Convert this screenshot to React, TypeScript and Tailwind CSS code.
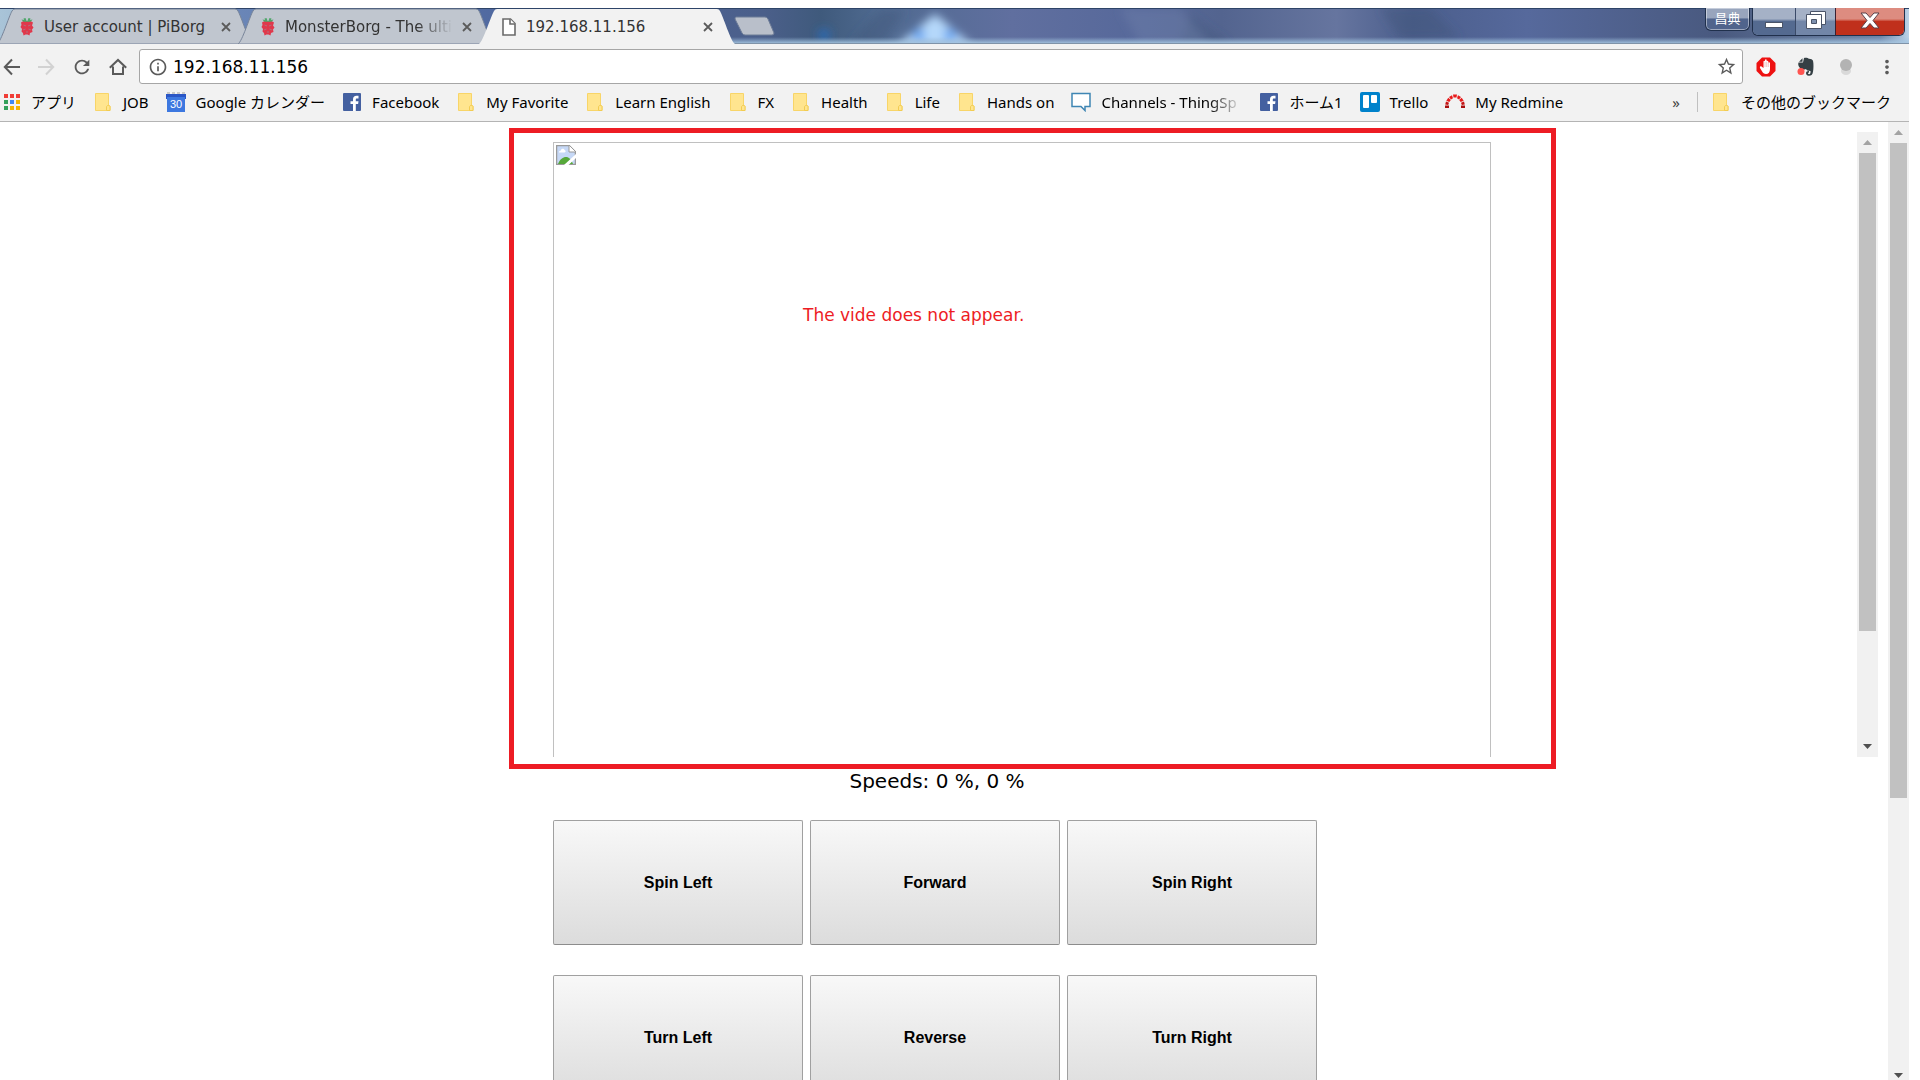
/**
 * Robot web console, drawn inside a Windows 7 era Chrome window.
 * The page shows the camera frame on top and the drive buttons below it.
 */

import type { ReactNode } from "react";
import { MdInfoOutline, MdMoreVert, MdRefresh, MdStarBorder } from "react-icons/md";

/* ---------- icons ---------- */

function RaspberryIcon() {
  return (
    <svg width="16" height="20" viewBox="0 0 16 20" className="shrink-0">
      <path d="M4.500 4h7l2.500 1.500-1 3 1.500 2-1.500 2 .5 2.500-2.500 1-.5 2.500-2-1h-2l-2 1L4 16l-1.500-1.500.5-2.500-1.500-2 1-2L2 5.500z" fill="#e0384b" />
      <path d="M8 5L6.500 1 4.500 1.500 5 3 2.500 2.500 4 4.500zM8 5l1.500-4 2 .5L11 3l2.500-.5L12 4.500z" fill="#4fa66a" />
      <path d="M4.500 8l2.500 1M11.500 8L9 9M4 13l2.500-1M12 13l-2.500-1M7 15h2" stroke="#b0707c" strokeWidth="1" />
    </svg>
  );
}

function PageIcon() {
  return (
    <svg width="16" height="18" viewBox="0 0 16 18" fill="#fff" stroke="#6b6b6b" strokeWidth="1.600" className="shrink-0">
      <path d="M2 1h7.500L14 5.500V17H2z" />
      <path d="M9 1v5h5" />
    </svg>
  );
}

function FolderIcon() {
  return (
    <svg width="20" height="20" viewBox="0 0 20 20">
      <path d="M2.500 1.500h13V13l1.500 1v4.500H2.500z" fill="#ffe58f" stroke="#f8d568" />
      <path d="M13.500 18.500V14.500a2 2 0 0 1 3.500 0v4z" fill="#ffe58f" stroke="#f2cc52" />
    </svg>
  );
}

const APP_COLORS = ["#f03e37", "#f03e37", "#f03e37", "#34a05a", "#4088f0", "#f5b400", "#34a05a", "#f5b400", "#f5b400"];

function AppsIcon() {
  return (
    <svg width="18" height="18" viewBox="0 0 18 18">
      {APP_COLORS.map((c, i) => (
        <rect key={i} x={1 + (i % 3) * 6} y={1 + Math.floor(i / 3) * 6} width="4" height="4" fill={c} />
      ))}
    </svg>
  );
}

function CalendarIcon() {
  return (
    <svg width="20" height="20" viewBox="0 0 20 20">
      <rect x="1" y="0" width="18" height="4" fill="#c9c9c9" />
      <path d="M5 0v2.500M10 0v2.500M15 0v2.500" stroke="#f4f4f4" strokeWidth="2" />
      <rect x="0" y="2" width="20" height="5" fill="#2a56c6" />
      <rect x="1" y="5" width="18" height="15" fill="#3d78e0" />
      <text x="10" y="16" textAnchor="middle" fontSize="11" fill="#fff" fontFamily="Liberation Sans, sans-serif">30</text>
    </svg>
  );
}

function FacebookIcon() {
  return (
    <svg width="20" height="20" viewBox="0 0 20 20">
      <rect x="1" y="1" width="18" height="18" rx="1" fill="#4460a0" />
      <path d="M11 19v-7H8.500V9.200H11V7.500C11 5 12.300 3.800 14.500 3.800h2v2.700H15c-1 0-1.200.5-1.200 1.200v1.500h2.700l-.4 2.800h-2.300v7z" fill="#fff" />
    </svg>
  );
}

function ChannelIcon() {
  return (
    <svg width="20" height="20" viewBox="0 0 20 20" fill="#fff" stroke="#3f86b4" strokeWidth="1.500">
      <path d="M1 1.500h18v13h-5v4l-4-4H1z" />
    </svg>
  );
}

function TrelloIcon() {
  return (
    <svg width="20" height="20" viewBox="0 0 20 20">
      <rect width="20" height="20" rx="2" fill="#0082cb" />
      <rect x="3" y="3" width="6" height="13" rx="1" fill="#fff" />
      <rect x="11" y="3" width="6" height="8" rx="1" fill="#fff" />
    </svg>
  );
}

function RedmineIcon() {
  return (
    <svg width="20" height="20" viewBox="0 0 20 20">
      <path d="M0 13.500h4V16H0zM16 13.500h4V16h-4z" fill="#a80f0f" />
      <path d="M1 9.500l3 1.200-.8 2.300-3-.5zM19 9.500l-3 1.200.8 2.300 3-.5z" fill="#c41414" />
      <path d="M3.300 5.800l2.500 2.200-1.500 2-3-1.300zM16.700 5.800l-2.500 2.200 1.500 2 3-1.300zM7 3.300l1 3L6 7.500 4 5zM13 3.300l-1 3 2 1.200L16 5zM8 2.600h4l-.5 3h-3z" fill="#e81c1c" />
    </svg>
  );
}

function BrokenImageIcon() {
  return (
    <svg width="20" height="20" viewBox="0 0 20 20" className="m-[2px]">
      <path d="M1 .500h12L19.500 7v12.500H.500V.500z" fill="#c6d8f6" stroke="#9a9a9a" strokeWidth="1.500" />
      <path d="M13 0v7h7z" fill="#fff" stroke="#9a9a9a" />
      <path d="M3 7.500c0-2 2-1.500 2-2.500 1-2 3.500-1 3.500 0 1.500 0 1.500 2.500 0 2.500z" fill="#fff" />
      <path d="M2 19c2-5 5-7 8-7s5 2 7 7z" fill="#56a83a" />
      <path d="M20 9v4l-7.500 7H8z" fill="#fff" />
    </svg>
  );
}

function AdblockIcon() {
  return (
    <svg width="20" height="20" viewBox="0 0 20 20">
      <path d="M6 .500h8L19.500 6v8L14 19.500H6L.500 14V6z" fill="#ee1111" />
      <path d="M5.500 9.500l2 1.500V4.500c0-1 1.500-1 1.500 0V3c0-1 1.700-1 1.700 0v1.500c0-1 1.600-1 1.600 0V6c0-1 1.700-1 1.700 0v6c0 3-1.500 5-4 5-2 0-3-.8-4-2.700L4 11c-.5-1.200.7-2 1.500-1.500z" fill="#fff" />
      <path d="M9 5v5M10.700 5v5M12.300 6v4" stroke="#e9a0a0" strokeWidth=".6" />
    </svg>
  );
}

function EvernoteIcon() {
  return (
    <svg width="20" height="20" viewBox="0 0 20 20">
      <path d="M8 1c2-.8 4 0 5 .8 2 .2 3.500.6 4 2 .7 3 .6 8 0 11-.4 3-2 4-4 4-2.500 0-3-1.800-3-2.800 0-1.500 1.500-2.200 3-2v1.600c-1.500 0-1.300 1.600 0 1.600 1.500 0 1.600-1.700 1.500-3.200-3 0-4-1-4.500-2-1.500 1-5 .8-6-1C2 9 2 7 2.500 5.500H7z" fill="#343f44" />
      <path d="M6.500 1.200v3.600H3z" fill="#343f44" />
      <circle cx="5" cy="14.500" r="3.500" fill="#ff5450" />
    </svg>
  );
}

function BulbIcon() {
  return (
    <svg width="20" height="20" viewBox="0 0 20 20">
      <ellipse cx="10" cy="14" rx="5" ry="4" fill="#d9d9d9" />
      <circle cx="10" cy="8" r="6" fill="#b3b3b3" />
    </svg>
  );
}

function Arrow({ flip }: { flip?: boolean }) {
  return (
    <svg width="18" height="18" viewBox="0 0 18 18" fill="none" stroke="currentColor" strokeWidth="2" className={flip ? "rotate-180" : ""}>
      <path d="M9 1.500L1.800 9 9 16.500M1.800 9H17" />
    </svg>
  );
}

function HomeIcon() {
  return (
    <svg width="18" height="18" viewBox="0 0 18 18" fill="none" stroke="#5a5a5a" strokeWidth="2">
      <path d="M.800 9.800L9 2l8.200 7.800M4 8.500V16h10V8.500" />
    </svg>
  );
}

/* ---------- title bar ---------- */

/** Blurred desktop showing through the Aero glass. */
function GlassBackdrop() {
  return (
    <svg className="absolute inset-0 h-full w-full" viewBox="0 0 1909 36" preserveAspectRatio="none" aria-hidden="true">
      <defs>
        <linearGradient id="glass">
          <stop offset="0" stopColor="#a9c4d8" />
          <stop offset=".12" stopColor="#6b87b8" />
          <stop offset=".26" stopColor="#5069a0" />
          <stop offset=".4" stopColor="#4b5f8a" />
          <stop offset=".43" stopColor="#3f5a7c" />
          <stop offset=".46" stopColor="#4f6a90" />
          <stop offset=".53" stopColor="#606f9f" />
          <stop offset=".6" stopColor="#56689a" />
          <stop offset=".64" stopColor="#53648f" />
          <stop offset=".7" stopColor="#66759f" />
          <stop offset=".74" stopColor="#4b5e8c" />
          <stop offset=".8" stopColor="#56699c" />
          <stop offset=".9" stopColor="#49597f" />
          <stop offset=".985" stopColor="#6f86a8" />
          <stop offset="1" stopColor="#bcd3e8" />
        </linearGradient>
        <linearGradient id="rim" x2="0" y2="1">
          <stop offset="0" stopColor="#9fc0de" stopOpacity="0" />
          <stop offset="1" stopColor="#a8c8e2" />
        </linearGradient>
        <filter id="soft" x="-50%" y="-50%" width="200%" height="200%">
          <feGaussianBlur stdDeviation="5" />
        </filter>
      </defs>
      <rect width="1909" height="36" fill="url(#glass)" />
      <g filter="url(#soft)">
        <path d="M850 36l30-34h26l-24 34zM1190 6l40 30h-50zM1380 0h50l30 30h-60z" fill="#3d5478" opacity=".4" />
        <path d="M1120 0h60l30 36h-70z" fill="#7381ac" opacity=".4" />
        <path d="M896 38L935 6l38 32z" fill="#b5d8fa" />
        <circle cx="919" cy="27" r="6" fill="#5b9ff0" />
        <circle cx="950" cy="27" r="6" fill="#5b9ff0" />
        <circle cx="824" cy="27" r="6" fill="#2b6cb8" />
      </g>
      <rect y="29" width="1909" height="7" fill="url(#rim)" />
      <rect width="1909" height="1" fill="#2e4468" />
      <rect y="35" width="1909" height="1" fill="#7f93a8" />
    </svg>
  );
}

type TabProps = { title: string; icon: ReactNode; active?: boolean; fade?: boolean };

function Tab({ title, icon, active, fade }: TabProps) {
  return (
    <div className={`relative -mr-[15px] flex h-9 w-[256px] shrink-0 items-center pt-[2px] pr-[19px] pl-[22px] ${active ? "z-10" : ""}`}>
      <svg className="absolute inset-0" width="256" height="36" viewBox="0 0 256 36" aria-hidden="true">
        <path
          d="M0 36C4 34 12 8 15 3q1-2 3-2h220q2 0 3 2c3 5 11 31 15 33z"
          fill={active ? "#f2f2f2" : "#c0c6cf"}
          stroke={active ? "none" : "#78859a"}
        />
      </svg>
      <div className="relative flex flex-1 items-center">
        {icon}
        <span
          className={`ml-[9px] w-[168px] text-[15px] leading-5 whitespace-nowrap text-[#333] ${fade ? "[mask-image:linear-gradient(to_right,#000_78%,transparent)]" : ""}`}
        >
          {title}
        </span>
        <button type="button" aria-label={`Close ${title}`} className="ml-auto flex size-4 items-center justify-center">
          <svg width="10" height="10" viewBox="0 0 10 10" stroke="#5b5b5b" strokeWidth="1.800">
            <path d="M1 1l8 8M9 1L1 9" />
          </svg>
        </button>
      </div>
    </div>
  );
}

function WindowControls() {
  const frame = "border border-t-0 border-[#20304c] shadow-[inset_0_0_0_1px_rgba(255,255,255,0.45)]";
  return (
    <div className="relative ml-auto flex items-start pr-1">
      <button
        type="button"
        className={`mr-[2px] h-[23px] w-[45px] rounded-b-md bg-linear-to-b from-[#98a5bd] from-45% to-[#50648c] to-50% text-[13px] leading-5 text-white ${frame}`}
      >
        昌典
      </button>
      <div className={`flex h-7 overflow-hidden rounded-b-md ${frame}`}>
        <button type="button" aria-label="Minimize" className="flex w-[42px] items-center justify-center bg-linear-to-b from-[#a5b1c6] from-40% to-[#546a90] to-50% pt-[7px]">
          <svg width="18" height="6" viewBox="0 0 18 6"><rect x=".5" y=".5" width="17" height="5" fill="#fff" stroke="#4a5468" /></svg>
        </button>
        <button type="button" aria-label="Restore" className="flex w-10 items-center justify-center border-l border-[#3a4a68] bg-linear-to-b from-[#a5b1c6] from-40% to-[#7286a8] to-50% pb-[3px]">
          <svg width="20" height="18" viewBox="0 0 20 18" fill="#fff" stroke="#4a5468">
            <path d="M4.500.500h15v13h-15z" />
            <path d="M.500 3.500h15v14H.500z" />
            <path d="M5.500 8.500h5v4h-5z" fill="#7d90ae" />
          </svg>
        </button>
        <button type="button" aria-label="Close" className="flex w-[69px] items-center justify-center border-l border-[#3a2030] bg-linear-to-b from-[#dd8c80] from-40% to-[#c0301c] to-50% pb-[3px]">
          <svg width="20" height="17" viewBox="0 0 20 17">
            <path d="M1 1h5l4 4.500L14 1h5l-6 7.500 6 7.500h-5l-4-4.500L6 16H1l6-7.500z" fill="#fff" stroke="#5a4048" />
          </svg>
        </button>
      </div>
    </div>
  );
}

function TitleBar() {
  return (
    <div className="relative flex h-9 overflow-hidden">
      <GlassBackdrop />
      <div className="relative -ml-[3px] flex">
        <Tab title="User account | PiBorg" icon={<RaspberryIcon />} />
        <Tab title="MonsterBorg - The ulti" icon={<RaspberryIcon />} fade />
        <Tab title="192.168.11.156" icon={<PageIcon />} active />
        <button type="button" aria-label="New tab" className="ml-[14px] self-center">
          <svg width="42" height="20" viewBox="0 0 42 20">
            <path d="M2 1h29q2 0 3 2l6 14q0 2-2 2H11q-2 0-3-2L1 3q0-2 1-2z" fill="#b9bfca" stroke="#6d7c97" />
          </svg>
        </button>
      </div>
      <WindowControls />
    </div>
  );
}

/* ---------- toolbar and bookmarks ---------- */

function Toolbar() {
  return (
    <div className="flex h-[45px] items-center bg-[#f2f2f2] pl-[3px] text-[#5a5a5a]">
      <div className="flex h-9 w-[136px] items-center gap-4">
        <button type="button" aria-label="Back"><Arrow /></button>
        <button type="button" aria-label="Forward" className="text-[#d2d2d2]"><Arrow flip /></button>
        <button type="button" aria-label="Reload"><MdRefresh size={22} /></button>
        <button type="button" aria-label="Home"><HomeIcon /></button>
      </div>
      <div className="flex h-[35px] flex-1 items-center rounded-[3px] border border-[#a6a6a6] bg-white pr-[5px] pl-2">
        <MdInfoOutline size={20} />
        <input aria-label="Address" defaultValue="192.168.11.156" className="ml-[5px] h-7 flex-1 text-[17px] text-black outline-none" />
        <button type="button" aria-label="Bookmark this page"><MdStarBorder size={21} /></button>
      </div>
      <div className="flex items-center gap-5 pr-[11px] pl-[13px]">
        <button type="button" aria-label="Adblock"><AdblockIcon /></button>
        <button type="button" aria-label="Evernote"><EvernoteIcon /></button>
        <button type="button" aria-label="Extension"><BulbIcon /></button>
        <button type="button" aria-label="Menu"><MdMoreVert size={22} /></button>
      </div>
    </div>
  );
}

const BOOKMARKS: { label: string; icon: ReactNode; fade?: boolean }[] = [
  { label: "JOB", icon: <FolderIcon /> },
  { label: "Google カレンダー", icon: <CalendarIcon /> },
  { label: "Facebook", icon: <FacebookIcon /> },
  { label: "My Favorite", icon: <FolderIcon /> },
  { label: "Learn English", icon: <FolderIcon /> },
  { label: "FX", icon: <FolderIcon /> },
  { label: "Health", icon: <FolderIcon /> },
  { label: "Life", icon: <FolderIcon /> },
  { label: "Hands on", icon: <FolderIcon /> },
  { label: "Channels - ThingSp", icon: <ChannelIcon />, fade: true },
  { label: "ホーム1", icon: <FacebookIcon /> },
  { label: "Trello", icon: <TrelloIcon /> },
  { label: "My Redmine", icon: <RedmineIcon /> },
];

function BookmarksBar() {
  return (
    <nav className="flex h-[33px] items-center gap-[17px] border-b border-[#b4b4b4] bg-[#f2f2f2] pb-[6px] pl-[3px] font-['Noto_Sans','Noto_Sans_CJK_JP',sans-serif] text-[15px] leading-5 whitespace-nowrap text-black">
      <a href="#apps" className="flex items-center gap-[10px]"><AppsIcon />アプリ</a>
      {BOOKMARKS.map((b) => (
        <a key={b.label} href="#bookmark" className="flex items-center gap-[10px]">
          {b.icon}
          <span className={b.fade ? "w-[141px] [mask-image:linear-gradient(to_right,#000_76%,transparent)]" : ""}>{b.label}</span>
        </a>
      ))}
      <button type="button" aria-label="More bookmarks" className="ml-auto text-[#444]">»</button>
      <a href="#other" className="flex items-center gap-[10px] border-l border-[#c0c0c0] pr-[18px] pl-[13px]">
        <FolderIcon />その他のブックマーク
      </a>
    </nav>
  );
}

/* ---------- page ---------- */

function ScrollBar({ thumb, className = "" }: { thumb: string; className?: string }) {
  return (
    <div className={`flex w-[21px] shrink-0 flex-col items-center bg-[#f1f1f1] ${className}`} aria-hidden="true">
      <div className="flex h-[21px] shrink-0 items-center">
        <svg width="9" height="5" viewBox="0 0 9 5"><path d="M0 5h9L4.500 0z" fill="#a3a3a3" /></svg>
      </div>
      <div className="min-h-0 w-full flex-1 px-[2px]">
        <div className={`bg-[#c1c1c1] ${thumb}`} />
      </div>
      <div className="flex h-[21px] shrink-0 items-center">
        <svg width="9" height="5" viewBox="0 0 9 5"><path d="M0 0h9L4.500 5z" fill="#505050" /></svg>
      </div>
    </div>
  );
}

function CameraFrame() {
  return (
    <section className="flex h-[625px] shrink-0">
      <div className="flex flex-1 justify-center pl-[3px]">
        <div className="relative w-[764px]">
          <div className="h-full w-[938px] pt-[10px]">
            <div className="h-full border border-b-0 border-[#c0c0c0]" role="img" aria-label="Camera stream">
              <BrokenImageIcon />
            </div>
          </div>
          <div className="absolute -top-1 -left-11 h-[641px] w-[1047px] border-5 border-[#ed1c24]">
            <p className="pt-[168px] pl-[289px] text-[17px] leading-7 text-[#ed1c24]">The vide does not appear.</p>
          </div>
        </div>
      </div>
      <ScrollBar thumb="h-[82%]" />
    </section>
  );
}

const COMMANDS = ["Spin Left", "Forward", "Spin Right", "Turn Left", "Reverse", "Turn Right"];

function Controls() {
  return (
    <section className="flex flex-col items-center pr-[18px]">
      <p className="pt-[9px] pb-[24px] pl-1 text-[20px] leading-[30px] text-black">Speeds: 0 %, 0 %</p>
      <div className="grid grid-cols-[250px_250px_250px] gap-x-[7px] gap-y-[30px]">
        {COMMANDS.map((c) => (
          <button
            key={c}
            type="button"
            className="h-[125px] rounded-[2px] border border-[#a0a0a0] border-b-[#8c8c8c] bg-linear-to-b from-[#f8f8f8] to-[#dcdcdc] font-['Liberation_Sans',sans-serif] text-[16px] leading-5 font-bold text-black"
          >
            {c}
          </button>
        ))}
      </div>
    </section>
  );
}

export default function App() {
  return (
    <div className="flex h-screen flex-col overflow-hidden bg-white pt-2 pr-[11px] font-['DejaVu_Sans','Noto_Sans_CJK_JP',sans-serif]">
      <header className="shrink-0">
        <TitleBar />
        <Toolbar />
        <BookmarksBar />
      </header>
      <div className="flex min-h-0 flex-1">
        <main className="flex flex-1 flex-col overflow-hidden px-[10px] pt-[10px]">
          <CameraFrame />
          <Controls />
        </main>
        <ScrollBar thumb="h-[71%]" className="-mb-[6px]" />
      </div>
    </div>
  );
}
